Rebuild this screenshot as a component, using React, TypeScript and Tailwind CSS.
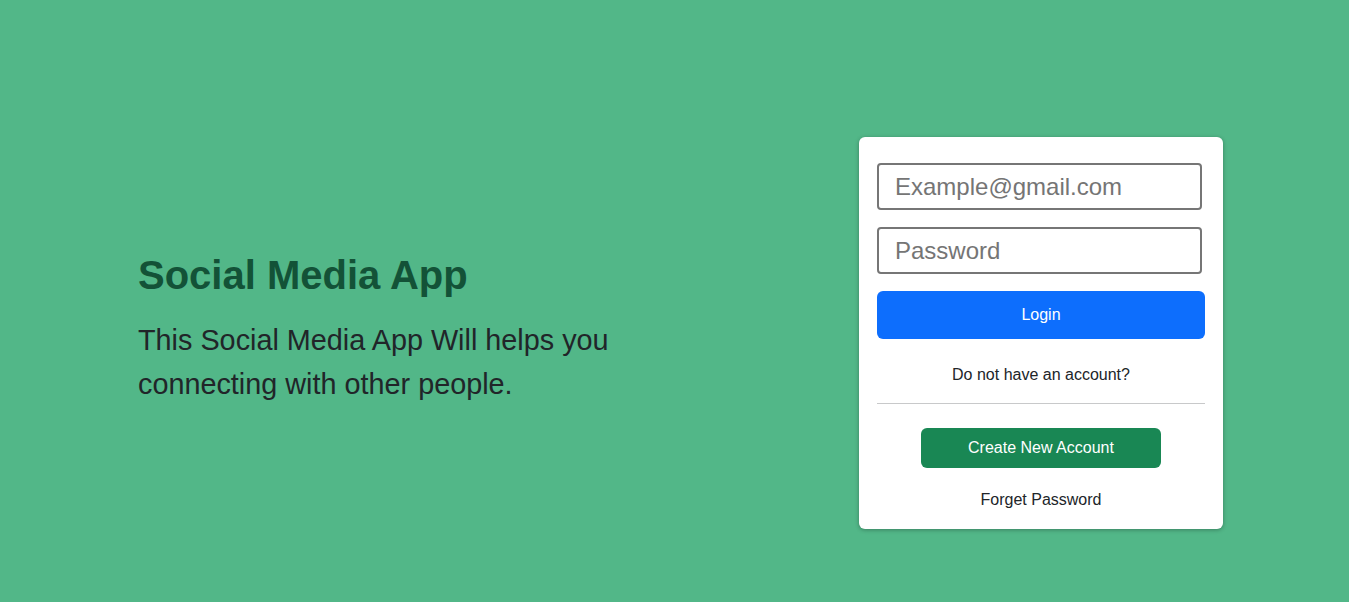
import React from "react";

const font = { fontFamily: '"Liberation Sans", Arial, sans-serif' };

const LoginCard: React.FC = () => (
  <div className="w-[364px] rounded-[6px] bg-white px-[18px] pt-[26px] pb-[17px] shadow-[0_1px_4px_rgba(0,0,0,0.3)]">
    <form className="flex flex-col" onSubmit={(e) => e.preventDefault()}>
      <input
        type="email"
        placeholder="Example@gmail.com"
        className="mb-[17px] h-[47px] w-[325px] rounded-[4px] border-2 border-[#767676] px-4 text-[24px] text-[#212529] placeholder:text-[#757575] outline-none"
      />
      <input
        type="password"
        placeholder="Password"
        className="mb-[17px] h-[47px] w-[325px] rounded-[4px] border-2 border-[#767676] px-4 text-[24px] text-[#212529] placeholder:text-[#757575] outline-none"
      />
      <button className="h-[48px] w-full rounded-[6px] bg-[#0d6efd] text-base text-white">
        Login
      </button>
    </form>
    <p className="mt-[24px] text-center text-base leading-6 text-[#212529]">Do not have an account?</p>
    <hr className="mt-[16px] border-0 border-t border-[#c8c9ca]" />
    <div className="mt-[24px] flex justify-center">
      <button className="h-[40px] w-[240px] rounded-[6px] bg-[#198754] text-base text-white">
        Create New Account
      </button>
    </div>
    <p className="mt-[20px] text-center text-base leading-6 text-[#212529]">Forget Password</p>
  </div>
);

export default function App() {
  return (
    <div style={font} className="flex min-h-screen items-center justify-between bg-[#52b788] pt-16 pl-[138px] pr-[126px]">
      <div className="max-w-[540px] pt-[7px]">
        <h1 className="mb-5 text-[40px] font-bold leading-[48px] text-[#135237]">Social Media App</h1>
        <p className="mb-4 text-[28.8px] leading-[43.2px] text-[#212529]">
          This Social Media App Will helps you connecting with other people.
        </p>
      </div>
      <LoginCard />
    </div>
  );
}
